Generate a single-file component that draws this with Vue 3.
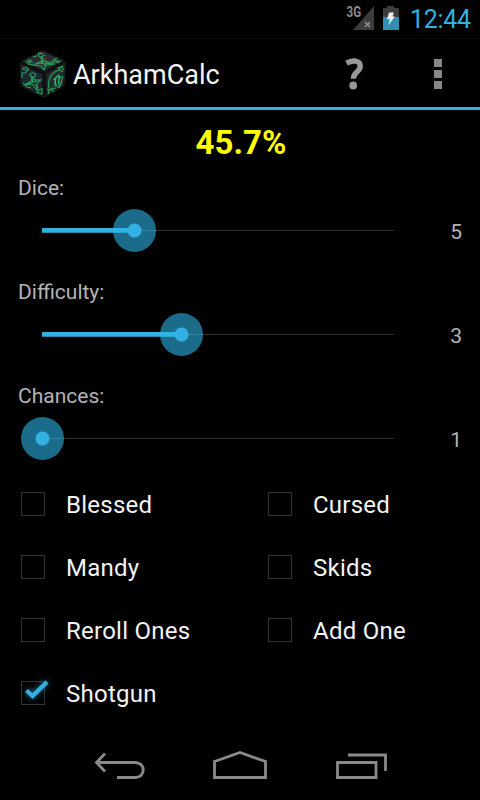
<script setup>
import {ref} from "vue";

const result = ref('45.7%')

// percent is the position of the thumb on the track
const sliders = ref([
    {label: 'Dice:', value: 5, percent: 26.42},
    {label: 'Difficulty:', value: 3, percent: 39.77},
    {label: 'Chances:', value: 1, percent: 0}
])

const options = ref([
    {label: 'Blessed', checked: false},
    {label: 'Cursed', checked: false},
    {label: 'Mandy', checked: false},
    {label: 'Skids', checked: false},
    {label: 'Reroll Ones', checked: false},
    {label: 'Add One', checked: false},
    {label: 'Shotgun', checked: true}
])

const toggle = (option) => {
    option.checked = !option.checked
}
</script>

<template>
    <div class="screen">
        <div class="status">
            <svg class="signal" width="28" height="26" viewBox="0 0 28 26">
                <path d="M27 2V26H6Z" fill="#3c3c3c"/>
                <path d="M18 18L23 23M23 18L18 23" stroke="#999" stroke-width="1.2"/>
                <text x="-.5" y="13" class="network" textLength="14.5" lengthAdjust="spacingAndGlyphs">3G</text>
            </svg>
            <svg class="battery" width="16" height="24" viewBox="0 0 16 24">
                <path d="M0 2H4V0H11V2H16V11H0Z" fill="#3c3c3c"/>
                <path d="M0 11H16V24H0Z" fill="#2f8fb7"/>
                <path d="M6 6.5H11L9.5 10.5H12L5.5 19L6.8 13.2H4Z" fill="#e8f0f2"/>
            </svg>
            <span class="clock">12:44</span>
        </div>
        <div class="bar">
            <svg class="logo" width="48" height="50" viewBox="0 0 48 50">
                <path d="M22 2Q24 1 26 2L45 11Q47 12 47 15L46 34Q46 37 43 39L27 48Q24 49 21 47L4 39Q1 37 1 34L1 15Q1 12 4 11Z" fill="#15191b"/>
                <path d="M4 12L23 2.500L44 12L26 22Z" fill="#282d31"/>
                <path d="M2 16L23 25V46L3 36Z" fill="#1f2630"/>
                <path d="M28 25L45 15L44 35L28 46Z" fill="#262b2e"/>
                <path d="M3 14L24 24L45 13M25 24V47" stroke="#0e1011" stroke-width="3" fill="none"/>
                <g fill="none" stroke="#23a257" stroke-width="1.100">
                    <path d="M24 5C19 2 17 7 22 8L26 6M22 8L23 12L14 16L22 17L25 21L27 16L36 15L26 12L23 8M22 13Q25 17 28 13Q25 11 22 13"/>
                    <path d="M7 14L10 11L12 12L9 15L13 16M14 8L18 7M38 9L33 12L36 13L42 12M35 10L40 14M10 13L14 13"/>
                    <path d="M3 20L9 21L6 24L3 24V29M4 19L7 18L10 20"/>
                    <path d="M14 24C10 24 10 28 14 28C18 28 17 24 14 24M13 28L12 32L6 36L13 35L18 41L18 34L22 31L16 31L14 28M13 31Q15 35 18 31"/>
                    <path d="M17 43L23 45V39M18 42L22 40M4 34L8 38L12 39"/>
                    <path d="M30 39C28 31 33 22 41 21M44 17L39 19L44 23M45 21L42 17"/>
                    <path d="M30 45L29 40L35 42M31 40L37 39M44 27L42 34L38 39M43 33L40 39"/>
                </g>
                <g fill="none" stroke="#2bb865" stroke-width="1.500">
                    <path d="M34.500 31L39.500 26.500L42 29M36.500 30L36 36L38 36M40 28.500L39.500 35"/>
                    <path d="M22 8L24 14L18 15M25 17L27 14L33 15M13 28L14 33L8 35M16 35L19 39M20 4L23 5" stroke-width=".9"/>
                </g>
            </svg>
            <span class="title">ArkhamCalc</span>
            <svg class="help" width="20" height="34" viewBox="0 0 20 34">
                <path d="M1.500 6.200C7.500 2.700 15.300 3 15.300 9.200C15.300 15 8.300 14.500 8.300 21.800" fill="none" stroke="#999" stroke-width="5.400"/>
                <circle cx="8.200" cy="28.500" r="3.900" fill="#999"/>
            </svg>
            <div class="overflow">
                <i></i><i></i><i></i>
            </div>
        </div>
        <div class="content">
            <div class="result">{{result}}</div>
            <div class="sliders">
                <div class="slider" v-for="item in sliders" :key="item.label">
                    <div class="label">{{item.label}}</div>
                    <div class="line">
                        <div class="track">
                            <div class="progress" :style="{width: item.percent + '%'}"></div>
                            <div class="thumb" :style="{left: item.percent + '%'}"></div>
                        </div>
                        <div class="value">{{item.value}}</div>
                    </div>
                </div>
            </div>
            <div class="options">
                <div class="option" v-for="item in options" :key="item.label" @click="toggle(item)">
                    <div class="box">
                        <svg v-if="item.checked" class="check" width="40" height="36" viewBox="0 0 40 36">
                            <path d="M13.500 18.500L19.500 24L34 10" fill="none" stroke="#33b0e2" stroke-width="4.300"/>
                        </svg>
                    </div>
                    <span class="name">{{item.label}}</span>
                </div>
            </div>
        </div>
        <div class="nav">
            <svg width="52" height="30" viewBox="0 0 52 30">
                <path d="M11 2.500L2.500 11.500L11 20.500M3 11.500H41C52 11.500 52 26.500 41 26.500H23" fill="none" stroke="#8a8a8a" stroke-width="2.800"/>
            </svg>
            <svg width="54" height="30" viewBox="0 0 54 30">
                <path d="M1.500 10.500L27 1.500L52.500 10.500V26.500H1.500Z" fill="none" stroke="#8a8a8a" stroke-width="2.800"/>
            </svg>
            <svg width="52" height="30" viewBox="0 0 52 30">
                <path d="M2.500 11.500H41V26.500H2.500ZM13 4H50.500V20" fill="none" stroke="#8a8a8a" stroke-width="2.800"/>
            </svg>
        </div>
    </div>
</template>

<style>
body {
    background: #000;
}
</style>

<style scoped>
.screen {
    width: 480px;
    height: 800px;
    display: flex;
    flex-direction: column;
    overflow: hidden;
    background: #000;
    font-family: Roboto, "Liberation Sans", sans-serif;
}
.status {
    height: 38px;
    flex: none;
    display: flex;
    justify-content: flex-end;
    align-items: flex-start;
    box-sizing: border-box;
    padding-right: 10px;
}
.signal {
    margin: 4px 8px 0 0;
    overflow: visible;
}
.network {
    font-size: 14px;
    font-weight: bold;
    fill: #8c8c8c;
}
.battery {
    margin: 6px 11px 0 0;
}
.clock {
    width: 60px;
    font-size: 25px;
    line-height: 40px;
    letter-spacing: -.3px;
    color: #33b0e2;
    white-space: nowrap;
}
.bar {
    height: 72px;
    flex: none;
    display: flex;
    align-items: center;
    box-sizing: border-box;
    border-top: 1px solid #0a0a0a;
    border-bottom: 3px solid #33b0e2;
    padding: 0 38px 0 19px;
}
.logo {
    margin: 1px 6px 0 0;
}
.title {
    flex: 1;
    font-size: 27px;
    color: #f3f3f3;
    padding-top: 3px;
}
.help {
    margin: 1px 69px 0 0;
}
.overflow {
    display: flex;
    flex-direction: column;
    gap: 3px;
    padding-top: 2px;
}
.overflow i {
    width: 8px;
    height: 8px;
    background: #888;
}
.content {
    flex: 1;
}
.result {
    height: 64px;
    line-height: 66px;
    padding-left: 2px;
    text-align: center;
    font-size: 33px;
    font-weight: bold;
    color: #ff0;
}
.sliders {
    display: flex;
    flex-direction: column;
    gap: 14px;
}
.slider {
    height: 90px;
    padding: 0 18px;
}
.label {
    height: 28px;
    line-height: 28px;
    font-size: 21px;
    color: #b4b4b4;
}
.line {
    height: 57px;
    display: flex;
    align-items: center;
    padding-left: 24px;
}
.track {
    position: relative;
    width: 352px;
    height: 1px;
    background: #333;
}
.progress {
    position: absolute;
    left: 0;
    top: -2px;
    height: 5px;
    background: linear-gradient(#33b0e2 4px, #2888ae 4px);
}
.thumb {
    position: absolute;
    top: .5px;
    width: 43px;
    height: 43px;
    margin: -21.5px 0 0 -21.5px;
    border-radius: 50%;
    background: radial-gradient(circle, #33b0e2 6.500px, rgba(46, 184, 238, .58) 7.500px);
}
.value {
    flex: 1;
    padding-top: 3px;
    text-align: right;
    font-size: 21px;
    color: #b4b4b4;
}
.options {
    display: grid;
    grid-template-columns: 247px 1fr;
    grid-auto-rows: 63px;
    padding-left: 21px;
}
.option {
    display: flex;
    align-items: center;
}
.box {
    position: relative;
    box-sizing: border-box;
    width: 24px;
    height: 24px;
    border: 1px solid #333;
    margin-right: 21px;
}
.check {
    position: absolute;
    left: -9px;
    top: -10px;
    filter: drop-shadow(0 0 3px rgba(51, 181, 229, .7));
}
.name {
    padding-top: 2px;
    font-size: 24px;
    letter-spacing: .25px;
    color: #f3f3f3;
}
.nav {
    height: 72px;
    flex: none;
    display: flex;
    align-items: flex-start;
    box-sizing: border-box;
    padding: 23px 0 0 94px;
}
.nav svg {
    margin-right: 67px;
}
.nav svg + svg {
    margin-right: 68px;
}
</style>
